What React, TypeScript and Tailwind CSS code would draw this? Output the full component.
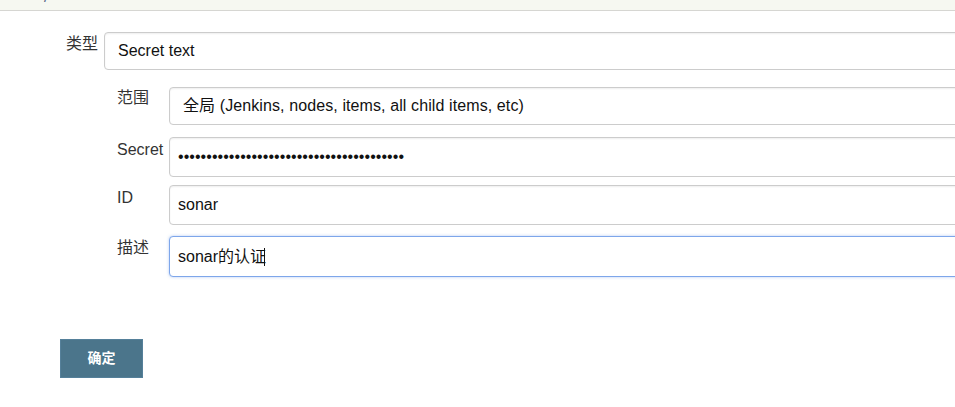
import React from "react";

const font = { fontFamily: '"Liberation Sans", Arial, "Noto Sans CJK SC", sans-serif' };

function Field({
  children,
  h,
  pl,
  focus,
}: {
  children: React.ReactNode;
  h: string;
  pl: string;
  focus?: boolean;
}) {
  return (
    <div
      className={
        "flex-1 -mr-[30px] flex items-center rounded-[4px] border bg-white text-[16px] text-[#111] " +
        h +
        " " +
        pl +
        " " +
        (focus
          ? "border-[#7ea6ea] shadow-[0_0_3px_rgba(102,150,233,0.5)]"
          : "border-[#cccccc] shadow-[inset_0_1px_2px_rgba(0,0,0,0.07)]")
      }
    >
      {children}
    </div>
  );
}

export default function App() {
  const dots = "•".repeat(40);
  return (
    <div className="relative h-[407px] w-[955px] overflow-hidden bg-white" style={font}>
      <div className="h-[11px] overflow-hidden border-b border-[#d6d6d2] bg-[#f6f8f1]">
        <div className="-mt-[13px] pl-[44px] text-[16px] leading-[20px] text-[#5a6a8a]">/</div>
      </div>

      <div className="mt-[21px] flex items-start pl-[66px]">
        <div className="w-[38px] pt-[2px] text-[16px] leading-[20px] text-[#333]">类型</div>
        <Field h="h-[38px]" pl="pl-[13px]">
          Secret text
        </Field>
      </div>

      <div className="mt-[17px] flex items-start pl-[117px]">
        <div className="w-[52px] pt-[1px] text-[16px] leading-[20px] text-[#333]">范围</div>
        <Field h="h-[38px]" pl="pl-[13px]">
          <span className="tracking-[0.1px]">全局 (Jenkins, nodes, items, all child items, etc)</span>
        </Field>
      </div>

      <div className="mt-[12px] flex items-start pl-[117px]">
        <div className="w-[52px] pt-[3px] text-[16px] leading-[20px] text-[#333]">Secret</div>
        <Field h="h-[40px]" pl="pl-[8px]">
          <span className="tracking-[0.05px]">{dots}</span>
        </Field>
      </div>

      <div className="mt-[8px] flex items-start pl-[117px]">
        <div className="w-[52px] pt-[3px] text-[16px] leading-[20px] text-[#333]">ID</div>
        <Field h="h-[40px]" pl="pl-[8px]">
          sonar
        </Field>
      </div>

      <div className="mt-[11px] flex items-start pl-[117px]">
        <div className="w-[52px] pt-[2px] text-[16px] leading-[20px] text-[#333]">描述</div>
        <Field h="h-[41px]" pl="pl-[8px]" focus>
          <span>sonar的认证</span>
          <span className="ml-[-2px] inline-block h-[18px] w-[1px] bg-[#111]" />
        </Field>
      </div>

      <div className="mt-[62px] pl-[60px]">
        <div className="flex h-[39px] w-[83px] items-center justify-center border border-[#55809a] bg-[#4b758b] text-[14px] font-bold text-white">
          确定
        </div>
      </div>
    </div>
  );
}
